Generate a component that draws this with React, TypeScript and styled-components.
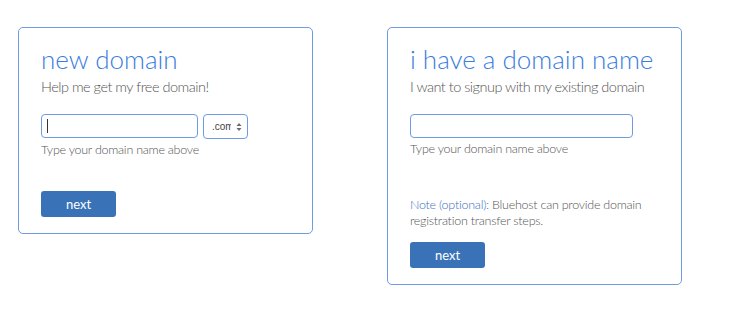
import { FC } from "react";
import styled, { createGlobalStyle } from "styled-components";

const GlobalStyle = createGlobalStyle`
  body {
    margin: 0;
    background: #ffffff;
    font-family: "Lato", "Open Sans", sans-serif;
  }
`;

export default function App() {
  return (
    <>
      <GlobalStyle />
      <StyledPage>
        <StyledCard $height={207}>
          <StyledTitle>new domain</StyledTitle>
          <StyledSubtitle>Help me get my free domain!</StyledSubtitle>
          <StyledFieldRow>
            <StyledInputWrap $width={157}>
              <StyledInput type="text" />
              <StyledCaret />
            </StyledInputWrap>
            <TldSelect />
          </StyledFieldRow>
          <StyledHelper>Type your domain name above</StyledHelper>
          <StyledButton $top={32}>next</StyledButton>
        </StyledCard>
        <StyledCard $height={258}>
          <StyledTitle>i have a domain name</StyledTitle>
          <StyledSubtitle>I want to signup with my existing domain</StyledSubtitle>
          <StyledFieldRow>
            <StyledInputWrap $width={223}>
              <StyledInput type="text" />
            </StyledInputWrap>
          </StyledFieldRow>
          <StyledHelper>Type your domain name above</StyledHelper>
          <StyledNote>
            <StyledNoteLabel>Note (optional):</StyledNoteLabel> Bluehost can
            provide domain registration transfer steps.
          </StyledNote>
          <StyledButton $top={13}>next</StyledButton>
        </StyledCard>
      </StyledPage>
    </>
  );
}

const TldSelect: FC = () => (
  <StyledSelect>
    <StyledSelectText>.com</StyledSelectText>
    <svg width="6" height="10" viewBox="0 0 6 10">
      <path d="M3 1 L5.5 4 H0.5 Z" fill="#6b6b6b" />
      <path d="M3 9 L5.5 6 H0.5 Z" fill="#6b6b6b" />
    </svg>
  </StyledSelect>
);

const StyledPage = styled.div`
  display: flex;
  align-items: flex-start;
  gap: 74px;
  padding: 27px 0 0 18px;
`;
const StyledCard = styled.div<{ $height: number }>`
  box-sizing: border-box;
  width: 295px;
  height: ${(p) => p.$height}px;
  border: 1px solid #6f9be4;
  border-radius: 5px;
  padding: 14px 22px 0;
  display: flex;
  flex-direction: column;
  align-items: flex-start;
`;
const StyledTitle = styled.h2`
  margin: 0;
  font-size: 26px;
  font-weight: 300;
  line-height: 34px;
  color: #3b7ddd;
`;
const StyledSubtitle = styled.p`
  margin: 1px 0 0;
  font-size: 14.5px;
  font-weight: 300;
  letter-spacing: -0.5px;
  line-height: 20px;
  color: #555555;
  white-space: nowrap;
`;
const StyledFieldRow = styled.div`
  display: flex;
  gap: 5px;
  margin-top: 17px;
`;
const StyledInputWrap = styled.div<{ $width: number }>`
  position: relative;
  width: ${(p) => p.$width}px;
  height: 24px;
`;
const StyledInput = styled.input`
  box-sizing: border-box;
  width: 100%;
  height: 100%;
  margin: 0;
  border: 1px solid #6f9be4;
  border-radius: 4px;
  background: #ffffff;
  outline: none;
  padding: 0 6px;
`;
const StyledCaret = styled.span`
  position: absolute;
  left: 6px;
  top: 5px;
  width: 1px;
  height: 14px;
  background: #333333;
`;
const StyledSelect = styled.div`
  box-sizing: border-box;
  width: 45px;
  height: 25px;
  border: 1px solid #6f9be4;
  border-radius: 4px;
  display: flex;
  align-items: center;
  gap: 5px;
  padding: 0 5px 0 8px;
`;
const StyledSelectText = styled.span`
  width: 19px;
  overflow: hidden;
  white-space: nowrap;
  font-family: "Liberation Sans", sans-serif;
  font-size: 10px;
  color: #444444;
`;
const StyledHelper = styled.p`
  margin: 2px 0 0;
  font-size: 12.5px;
  font-weight: 300;
  letter-spacing: -0.25px;
  line-height: 18px;
  color: #555555;
`;
const StyledNote = styled.p`
  margin: 39px 0 0;
  width: 240px;
  font-size: 12.5px;
  font-weight: 300;
  letter-spacing: -0.25px;
  line-height: 16px;
  color: #555555;
`;
const StyledNoteLabel = styled.span`
  color: #3a72c4;
`;
const StyledButton = styled.button<{ $top: number }>`
  margin-top: ${(p) => p.$top}px;
  width: 75px;
  height: 26px;
  border: none;
  border-radius: 3px;
  background: #3a72b8;
  color: #ffffff;
  font-family: "Lato", sans-serif;
  font-size: 13px;
  font-weight: 400;
  cursor: pointer;
`;
